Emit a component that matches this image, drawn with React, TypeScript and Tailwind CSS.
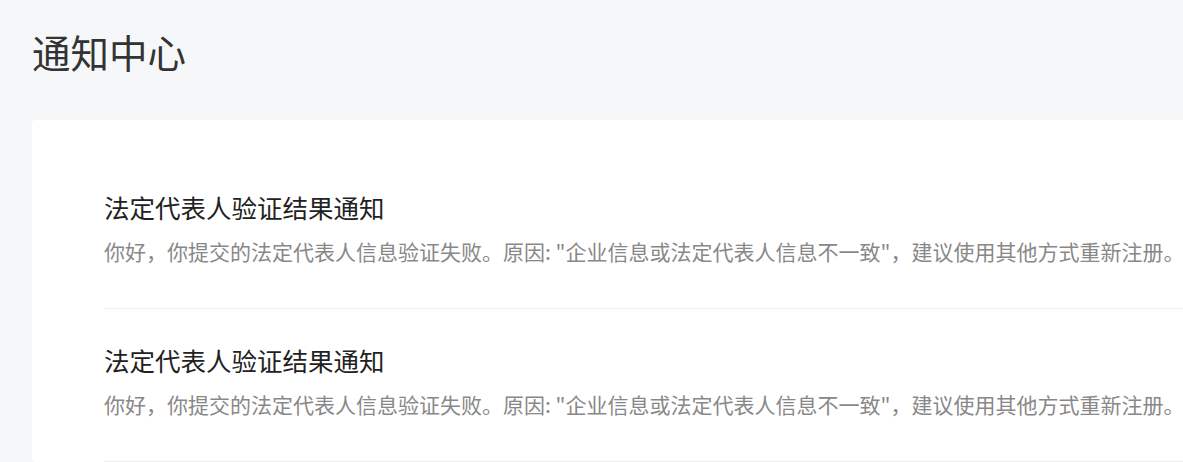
const notices = [
  {
    title: "法定代表人验证结果通知",
    body: '你好，你提交的法定代表人信息验证失败。原因: "企业信息或法定代表人信息不一致"，建议使用其他方式重新注册。',
  },
  {
    title: "法定代表人验证结果通知",
    body: '你好，你提交的法定代表人信息验证失败。原因: "企业信息或法定代表人信息不一致"，建议使用其他方式重新注册。',
  },
];

export default function App() {
  return (
    <div
      className="min-h-[462px] bg-[#f6f7f9] pl-8 pt-[22px]"
      style={{ fontFamily: '"Noto Sans CJK SC", "Noto Sans", sans-serif' }}
    >
      <h1 className="text-[38.5px] leading-[58px] font-normal text-[#333333]">通知中心</h1>
      <section className="mt-[40px] rounded-l-[4px] bg-white pl-[72px] pt-[36px]">
        {notices.map((n, i) => (
          <div key={i} className="border-b border-[#eeeeee] pt-[34px] pb-[42px]">
            <h3 className="text-[25.5px] leading-[34px] font-normal text-[#222222]">{n.title}</h3>
            <p className="mt-[12px] whitespace-nowrap text-[21px] leading-[30px] text-[#888888]">{n.body}</p>
          </div>
        ))}
      </section>
    </div>
  );
}
